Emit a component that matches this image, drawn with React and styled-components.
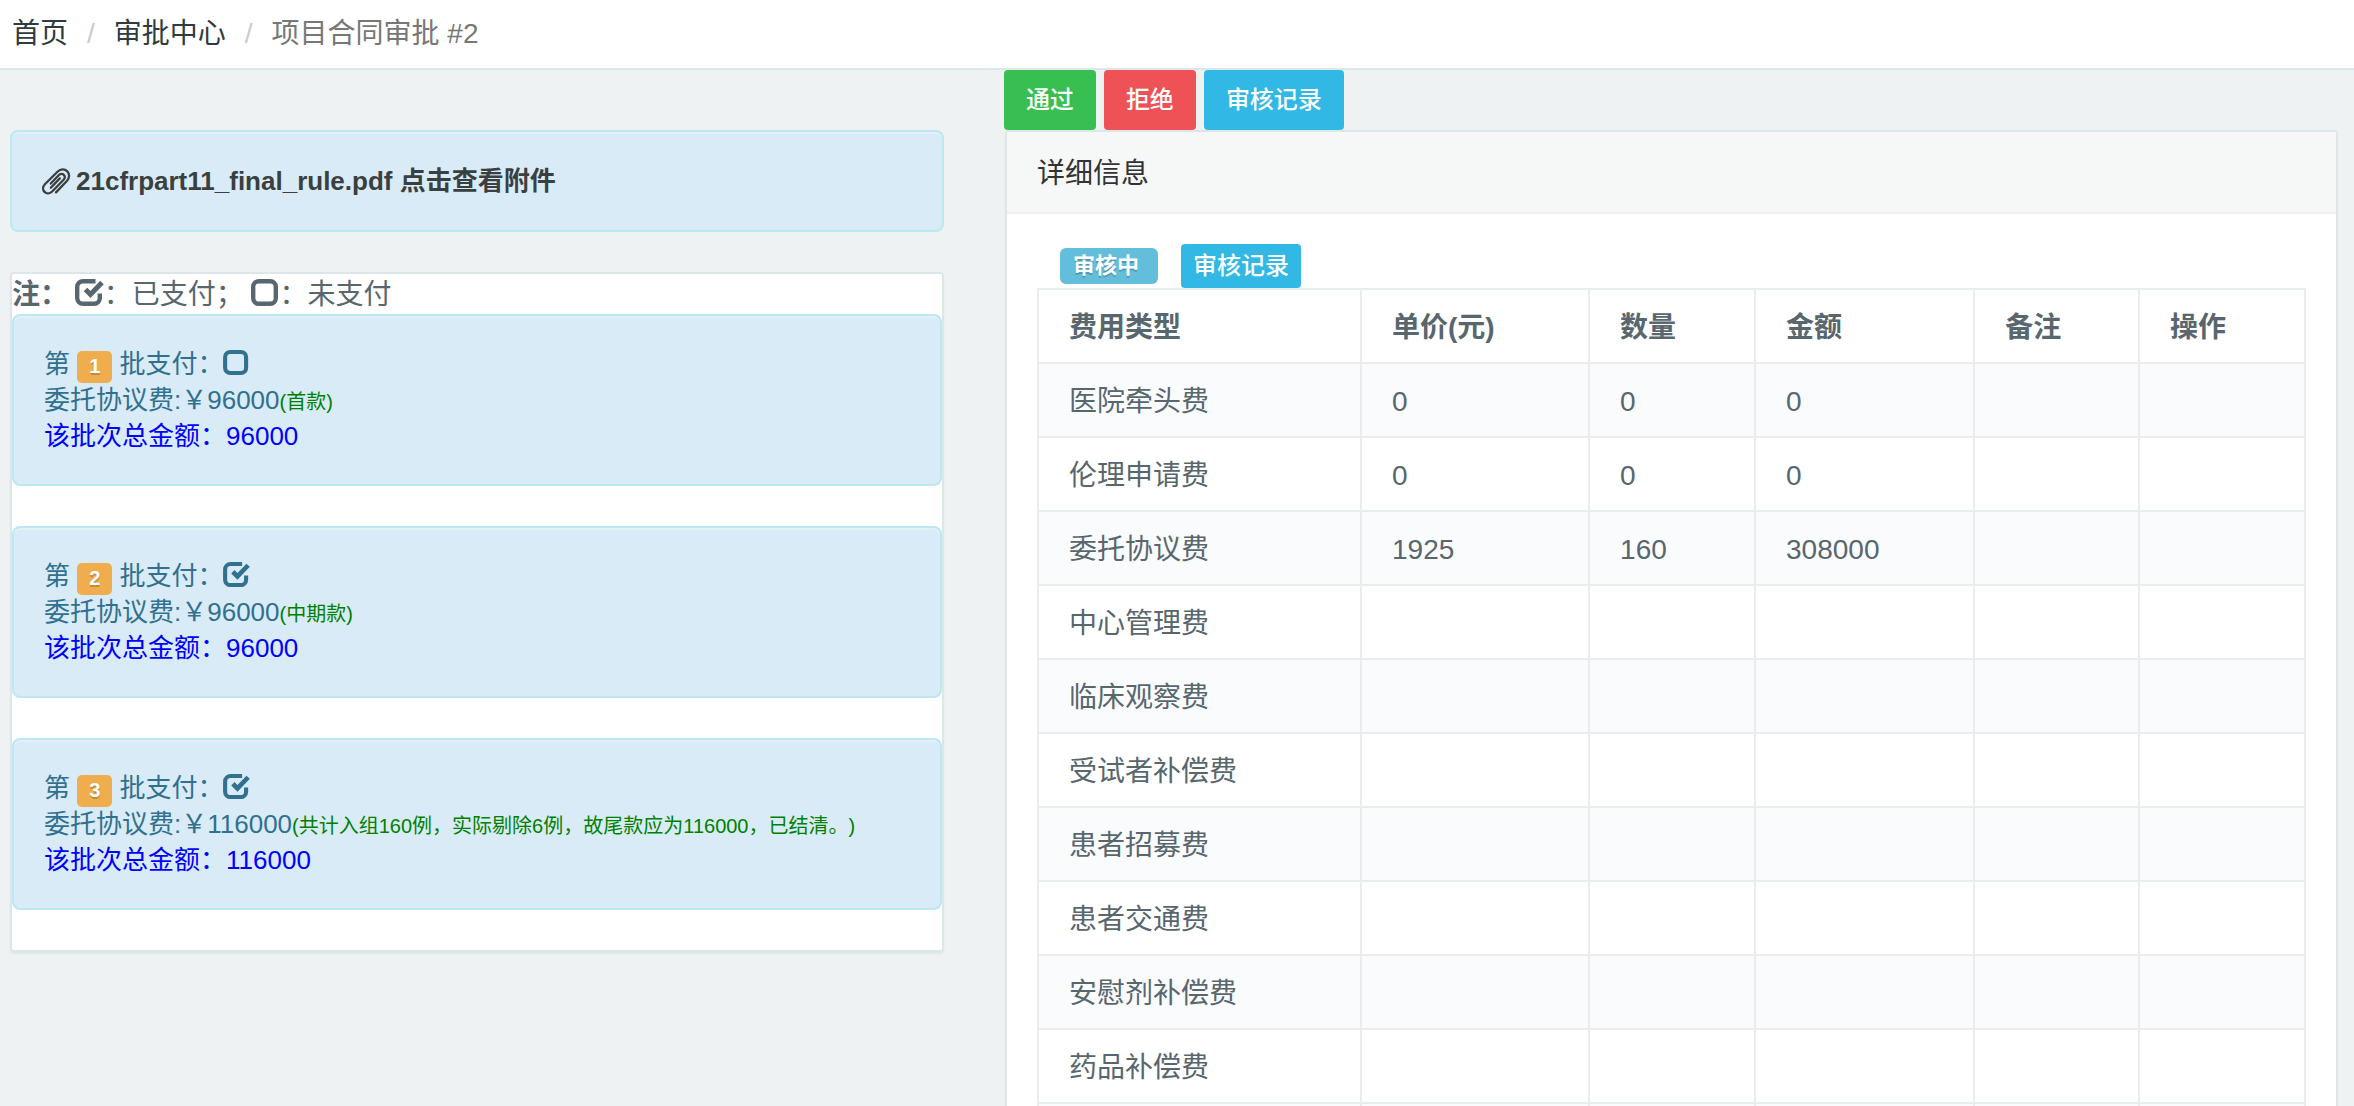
import styled, { createGlobalStyle } from "styled-components"

const GlobalStyle = createGlobalStyle`
	* {
		box-sizing: border-box;
	}

	body {
		margin: 0;
		background-color: #eef2f3;
		color: #58666e;
		font-family: "Liberation Sans", "Noto Sans CJK SC", sans-serif;
		font-size: 28px;
		line-height: 40px;
		text-spacing-trim: space-all;
	}
`

const Page = styled.div`
	display: flex;
	flex-direction: column;
	height: 100vh;
	overflow: hidden;
`

const Breadcrumb = styled.nav`
	flex: none;
	padding: 14px 12px;
	background-color: #fff;
	border-bottom: 2px solid #dde6e9;

	ol {
		display: flex;
		margin: 0;
		padding: 0;
		list-style: none;
	}

	li {
		color: #777;
	}

	li + li::before {
		content: "/";
		padding: 0 19px;
		color: #ccc;
	}

	a {
		color: #303b40;
		text-decoration: none;
	}
`

const Content = styled.main`
	display: grid;
	grid-template-columns: 7fr 10fr;
	gap: 60px;
	align-items: start;
	padding: 0 16px 0 10px;
`

const Payments = styled.section`
	display: flex;
	flex-direction: column;
	gap: 40px;
	padding-top: 60px;
`

const Alert = styled.div`
	padding: 30px;
	background-color: #d9ebf6;
	border: 2px solid #bce8f1;
	border-radius: 8px;
	box-shadow: inset 0 2px 0 rgba(255, 255, 255, 0.25);
	color: #31708f;
	font-size: 26px;
	line-height: 36px;

	p {
		margin: 0;
	}
`

const Attachment = styled.a`
	display: flex;
	align-items: center;
	gap: 6px;
	height: 38px;
	color: #3a3f41;
	font-weight: bold;
	text-decoration: none;
`

const Panel = styled.section`
	background-color: #fff;
	border: 2px solid #dde6e9;
	border-radius: 4px;
	box-shadow: 0 2px 2px rgba(0, 0, 0, 0.05);
`

const DetailPanel = styled(Panel)`
	margin-left: 1px;
`

const Legend = styled.p`
	margin: 0;
	padding-top: 2px;
	line-height: 38px;
`

const BatchList = styled.div`
	display: flex;
	flex-direction: column;
	gap: 40px;
	padding-bottom: 40px;
`

const BatchNo = styled.span`
	padding: 4px 12px 6px;
	background-color: #f0ad4e;
	border-radius: 5px;
	color: #fff;
	font-size: 20px;
	font-weight: bold;
	line-height: 1;
	text-shadow: 0 2px 0 rgba(0, 0, 0, 0.2);
`

const Note = styled.span`
	color: green;
	font-size: 20px;
	line-height: 1;
`

const Total = styled.p`
	color: blue;
`

const Icon = styled.svg`
	width: 1em;
	height: 1em;
	vertical-align: -3px;
	overflow: visible;
	fill: none;
	stroke: currentColor;
`

const Clip = styled(Icon)`
	width: 28px;
	height: 27px;
`

const Toolbar = styled.div`
	display: flex;
	gap: 8px;
`

const buttonColors = {
	success: "#37c051",
	danger: "#ee5257",
	info: "#32b8e4",
}

const Button = styled.button`
	height: ${(props) => (props.$small ? "44px" : "60px")};
	padding: 0 ${(props) => (props.$small ? "12px" : "22px")};
	background-color: ${(props) => buttonColors[props.$color]};
	border: none;
	border-radius: 4px;
	color: #fff;
	font-family: inherit;
	font-size: 24px;
	font-weight: 500;
	line-height: 36px;
	cursor: pointer;
`

const PanelTitle = styled.h2`
	margin: 0;
	padding: 22px 30px 18px;
	background-color: #f6f8f8;
	border-bottom: 2px solid #edf1f2;
	color: #333;
	font-size: 28px;
	font-weight: normal;
`

const PanelBody = styled.div`
	padding: 30px;
`

const StatusRow = styled.div`
	display: flex;
	align-items: center;
	gap: 23px;
	padding-left: 23px;
`

const Status = styled.span`
	padding: 0 19px 0 13px;
	background-color: #62bedb;
	border-radius: 6px;
	color: #fff;
	font-size: 22px;
	font-weight: bold;
	line-height: 36px;
	text-shadow: 0 2px 0 rgba(0, 0, 0, 0.2);
`

const FeeTable = styled.table`
	width: 100%;
	table-layout: fixed;
	border-collapse: collapse;

	th,
	td {
		height: 74px;
		padding: 18px 30px 14px;
		border: 2px solid #e8eeee;
		text-align: left;
	}

	tbody tr:nth-child(odd) {
		background-color: #fafbfd;
	}
`

const columns = [
	{ name: "费用类型", width: "25.5%" },
	{ name: "单价(元)", width: "18%" },
	{ name: "数量", width: "13.1%" },
	{ name: "金额", width: "17.3%" },
	{ name: "备注", width: "13%" },
	{ name: "操作", width: "13.1%" },
]

const fees = [
	["医院牵头费", "0", "0", "0"],
	["伦理申请费", "0", "0", "0"],
	["委托协议费", "1925", "160", "308000"],
	["中心管理费"],
	["临床观察费"],
	["受试者补偿费"],
	["患者招募费"],
	["患者交通费"],
	["安慰剂补偿费"],
	["药品补偿费"],
	[""],
]

const batches = [
	{ no: 1, paid: false, amount: 96000, note: "首款" },
	{ no: 2, paid: true, amount: 96000, note: "中期款" },
	{
		no: 3,
		paid: true,
		amount: 116000,
		note: "共计入组160例，实际剔除6例，故尾款应为116000，已结清。",
	},
]

function PaidIcon({ paid }) {
	if (!paid)
		return (
			<Icon viewBox="0 0 28 28" role="img" aria-label="未支付">
				<rect x="1.2" y="2.2" width="22.6" height="22.6" rx="5.5" strokeWidth="4.4" />
			</Icon>
		)
	return (
		<Icon viewBox="0 0 28 28" role="img" aria-label="已支付">
			<path
				d="M19.5 2.2H7A5.8 5.8 0 0 0 1.2 8V19A5.8 5.8 0 0 0 7 24.8H18A5.8 5.8 0 0 0 23.8 19V14.5"
				strokeWidth="4.4"
			/>
			<path d="M9.5 10.5L14.5 15.5L26 3.5" strokeWidth="5" />
		</Icon>
	)
}

function PaperclipIcon() {
	return (
		<Clip viewBox="0 0 27 26" aria-hidden="true" strokeWidth="2.2" strokeLinecap="round">
			<path d="M13.5 23.5L24.2 12.2C26.6 9.5 26.8 5.6 24.4 3.2C21.8 0.6 17.8 0.8 15.2 3.4L3 15.4C0.6 17.9 0.4 21 2.4 23C4.4 25 7.6 24.8 9.8 22.6L20.6 11.6C22.1 10 22.3 7.9 21 6.6C19.7 5.3 17.6 5.5 16.1 7L8.5 15" />
			<path d="M8.5 19L17.2 10" />
		</Clip>
	)
}

function Batch({ batch }) {
	return (
		<Alert>
			<p>
				第 <BatchNo>{batch.no}</BatchNo> 批支付：
				<PaidIcon paid={batch.paid} />
			</p>
			<p>
				委托协议费:￥{batch.amount}
				<Note>({batch.note})</Note>
			</p>
			<Total>该批次总金额：{batch.amount}</Total>
		</Alert>
	)
}

export default function App() {
	return (
		<>
			<GlobalStyle />
			<Page lang="zh-CN">
				<Breadcrumb>
					<ol>
						<li>
							<a href="#home">首页</a>
						</li>
						<li>
							<a href="#approval">审批中心</a>
						</li>
						<li>项目合同审批 #2</li>
					</ol>
				</Breadcrumb>

				<Content>
					<Payments>
						<Alert>
							<Attachment href="#attachment">
								<PaperclipIcon />
								<span>21cfrpart11_final_rule.pdf 点击查看附件</span>
							</Attachment>
						</Alert>
						<Panel>
							<Legend>
								<strong>注：</strong> <PaidIcon paid />：已支付； <PaidIcon />：未支付
							</Legend>
							<BatchList>
								{batches.map((batch) => (
									<Batch key={batch.no} batch={batch} />
								))}
							</BatchList>
						</Panel>
					</Payments>

					<div>
						<Toolbar>
							<Button $color="success">通过</Button>
							<Button $color="danger">拒绝</Button>
							<Button $color="info">审核记录</Button>
						</Toolbar>
						<DetailPanel>
							<PanelTitle>详细信息</PanelTitle>
							<PanelBody>
								<StatusRow>
									<Status>审核中</Status>
									<Button $color="info" $small>
										审核记录
									</Button>
								</StatusRow>
								<FeeTable>
									<colgroup>
										{columns.map((column) => (
											<col key={column.name} width={column.width} />
										))}
									</colgroup>
									<thead>
										<tr>
											{columns.map((column) => (
												<th key={column.name}>{column.name}</th>
											))}
										</tr>
									</thead>
									<tbody>
										{fees.map((fee) => (
											<tr key={fee[0]}>
												{columns.map((column, i) => (
													<td key={column.name}>{fee[i]}</td>
												))}
											</tr>
										))}
									</tbody>
								</FeeTable>
							</PanelBody>
						</DetailPanel>
					</div>
				</Content>
			</Page>
		</>
	)
}
